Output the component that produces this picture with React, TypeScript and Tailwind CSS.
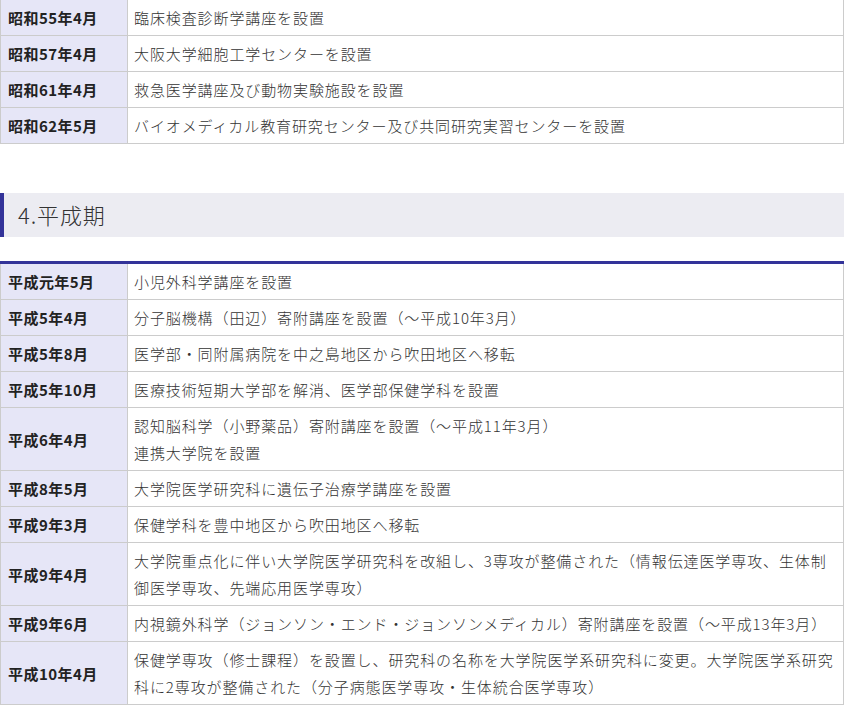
import React from "react";

const top: [string, string[]][] = [
  ["昭和55年4月", ["臨床検査診断学講座を設置"]],
  ["昭和57年4月", ["大阪大学細胞工学センターを設置"]],
  ["昭和61年4月", ["救急医学講座及び動物実験施設を設置"]],
  ["昭和62年5月", ["バイオメディカル教育研究センター及び共同研究実習センターを設置"]],
];

const heisei: [string, string[]][] = [
  ["平成元年5月", ["小児外科学講座を設置"]],
  ["平成5年4月", ["分子脳機構（田辺）寄附講座を設置（〜平成10年3月）"]],
  ["平成5年8月", ["医学部・同附属病院を中之島地区から吹田地区へ移転"]],
  ["平成5年10月", ["医療技術短期大学部を解消、医学部保健学科を設置"]],
  ["平成6年4月", ["認知脳科学（小野薬品）寄附講座を設置（〜平成11年3月）", "連携大学院を設置"]],
  ["平成8年5月", ["大学院医学研究科に遺伝子治療学講座を設置"]],
  ["平成9年3月", ["保健学科を豊中地区から吹田地区へ移転"]],
  ["平成9年4月", ["大学院重点化に伴い大学院医学研究科を改組し、3専攻が整備された（情報伝達医学専攻、生体制御医学専攻、先端応用医学専攻）"]],
  ["平成9年6月", ["内視鏡外科学（ジョンソン・エンド・ジョンソンメディカル）寄附講座を設置（〜平成13年3月）"]],
  ["平成10年4月", ["保健学専攻（修士課程）を設置し、研究科の名称を大学院医学系研究科に変更。大学院医学系研究科に2専攻が整備された（分子病態医学専攻・生体統合医学専攻）"]],
];

function Table({ rows, blue }: { rows: [string, string[]][]; blue?: boolean }) {
  return (
    <table
      className={
        "w-[844px] table-fixed border-collapse " +
        (blue ? "border-t-[3px] border-t-[#333399]" : "")
      }
    >
      <colgroup>
        <col className="w-[127px]" />
        <col />
      </colgroup>
      <tbody>
        {rows.map(([d, lines], i) => (
          <tr key={i}>
            <th
              className={
                "border border-[#cccccc] bg-[#e6e6f7] px-[7px] py-[4px] text-left align-middle text-[15px] font-bold leading-[27px] tracking-[0.03em] text-[#222222] " +
                (blue && i === 0 ? "border-t-0" : "")
              }
            >
              {d}
            </th>
            <td
              className={
                "border border-[#cccccc] bg-white pl-[6px] pr-[8px] py-[4px] align-middle text-[15px] font-light leading-[27px] tracking-[0.06em] text-[#333333] " +
                (blue && i === 0 ? "border-t-0" : "")
              }
            >
              {lines.map((l, j) => (
                <div key={j}>{l}</div>
              ))}
            </td>
          </tr>
        ))}
      </tbody>
    </table>
  );
}

export default function App() {
  return (
    <div
      className="w-[845px] bg-white"
      style={{ fontFamily: '"Noto Sans CJK JP", "Noto Sans", sans-serif' }}
    >
      <div className="-mt-[1px]">
        <Table rows={top} />
      </div>
      <div className="mt-[49px] mb-[24px] flex h-[44px] w-[844px] items-center border-l-[4px] border-[#333399] bg-[#ececf2] pl-[14px]">
        <h2 className="-mt-[2px] text-[22px] font-light leading-none tracking-[0.04em] text-[#333333]">4.平成期</h2>
      </div>
      <Table rows={heisei} blue />
    </div>
  );
}
